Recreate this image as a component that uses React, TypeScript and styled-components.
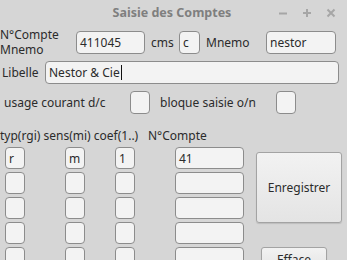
import React from 'react';
import styled, { createGlobalStyle } from 'styled-components';

const GlobalStyle = createGlobalStyle`
  html, body {
    margin: 0;
    padding: 0;
    background: #d6d6d6;
  }
  body {
    font-family: "Noto Sans", "DejaVu Sans", sans-serif;
    font-size: 12px;
    color: #2b2b2b;
  }
`;

const rows = [
  { typ: 'r', sens: 'm', coef: '1', compte: '41' },
  { typ: '', sens: '', coef: '', compte: '' },
  { typ: '', sens: '', coef: '', compte: '' },
  { typ: '', sens: '', coef: '', compte: '' },
  { typ: '', sens: '', coef: '', compte: '' },
];

const App: React.FC = () => {
  return (
    <Window>
      <GlobalStyle />
      <TitleBar>
        <span />
        <Title>Saisie des Comptes</Title>
        <Controls>
          <svg width="10" height="10" viewBox="0 0 10 10">
            <path d="M1 5.5h8" stroke="#a6a6a6" strokeWidth="2" />
          </svg>
          <svg width="10" height="10" viewBox="0 0 10 10">
            <path d="M1 5h8M5 1v8" stroke="#a6a6a6" strokeWidth="2" />
          </svg>
          <svg width="10" height="10" viewBox="0 0 10 10">
            <path d="M1.5 1.5l7 7M8.5 1.5l-7 7" stroke="#a6a6a6" strokeWidth="2" />
          </svg>
        </Controls>
      </TitleBar>

      <Row $top={3}>
        <StackLabel>
          <span>N°Compte</span>
          <span>Mnemo</span>
        </StackLabel>
        <Field $w={69}>411045</Field>
        <Label $w={28} $ml={6}>cms</Label>
        <Field $w={21}>c</Field>
        <Label $w={60} $ml={6}>Mnemo</Label>
        <Field $w={70}>nestor</Field>
      </Row>

      <Row $top={4}>
        <Label $w={43} $ml={2}>Libelle</Label>
        <Field $w={294}>
          Nestor &amp; Cie<Caret />
        </Field>
      </Row>

      <Row $top={7}>
        <Label $w={126} $ml={4}>usage courant d/c</Label>
        <Check />
        <Label $w={116} $ml={10}>bloque saisie o/n</Label>
        <Check />
      </Row>

      <Header>
        <HeaderCols>typ(rgi) sens(mi) coef(1..)</HeaderCols>
        <span>N°Compte</span>
      </Header>

      <Body>
        <Grid>
          {rows.map((r, i) => (
            <React.Fragment key={i}>
              <Cell $w={20}>{r.typ}</Cell>
              <Cell $w={20}>{r.sens}</Cell>
              <Cell $w={20}>{r.coef}</Cell>
              <Cell $w={69}>{r.compte}</Cell>
            </React.Fragment>
          ))}
        </Grid>
        <Actions>
          <BigButton>Enregistrer</BigButton>
          <SmallButton>Efface</SmallButton>
        </Actions>
      </Body>
    </Window>
  );
};

export default App;

const Window = styled.div`
  width: 347px;
  height: 260px;
  overflow: hidden;
  background: #d6d6d6;
`;

const TitleBar = styled.div`
  height: 24px;
  display: grid;
  grid-template-columns: 1fr auto 1fr;
  align-items: center;
`;

const Title = styled.div`
  font-weight: bold;
  font-size: 12.5px;
  color: #7f7f7f;
  padding-right: 3px;
`;

const Controls = styled.div`
  display: flex;
  justify-content: flex-end;
  gap: 14px;
  padding-right: 11px;
  padding-top: 1px;
`;

const Row = styled.div<{ $top: number }>`
  display: flex;
  align-items: center;
  margin-top: ${(p) => p.$top}px;
`;

const StackLabel = styled.div`
  display: flex;
  flex-direction: column;
  line-height: 15px;
  width: 76px;
`;

const Label = styled.span<{ $w: number; $ml?: number }>`
  box-sizing: border-box;
  width: ${(p) => p.$w}px;
  margin-left: ${(p) => p.$ml ?? 0}px;
  white-space: nowrap;
`;

const Field = styled.div<{ $w: number }>`
  box-sizing: border-box;
  width: ${(p) => p.$w}px;
  height: 23px;
  padding: 0 3px;
  display: flex;
  align-items: center;
  background: #f3f3f3;
  border: 1px solid #8c8c8c;
  border-radius: 4px;
  color: #2b2b2b;
  white-space: nowrap;
`;

const Caret = styled.span`
  display: inline-block;
  width: 0;
  height: 15px;
  border-left: 1px solid #111;
  margin-left: 1px;
`;

const Check = styled.div`
  box-sizing: border-box;
  width: 20px;
  height: 23px;
  background: #f3f3f3;
  border: 1px solid #8c8c8c;
  border-radius: 4px;
`;

const Header = styled.div`
  display: flex;
  margin-top: 12px;
  height: 18px;
  align-items: center;
  white-space: nowrap;
`;

const HeaderCols = styled.span`
  width: 148px;
`;

const Body = styled.div`
  display: flex;
  margin-top: 3px;
`;

const Grid = styled.div`
  display: grid;
  grid-template-columns: 60px 50px 60px 69px;
  row-gap: 3px;
  margin-left: 5px;
  height: fit-content;
`;

const Cell = styled.div<{ $w: number }>`
  box-sizing: border-box;
  width: ${(p) => p.$w}px;
  height: 22px;
  padding: 0 3px;
  display: flex;
  align-items: center;
  background: #f3f3f3;
  border: 1px solid #8c8c8c;
  border-radius: 4px;
  white-space: nowrap;
`;

const Actions = styled.div`
  display: flex;
  flex-direction: column;
  align-items: flex-start;
  margin-left: 12px;
  padding-top: 5px;
`;

const ButtonBase = styled.div`
  box-sizing: border-box;
  display: flex;
  align-items: center;
  justify-content: center;
  background: linear-gradient(#f2f2f2, #e4e4e4);
  border: 1px solid #a3a3a3;
  border-radius: 3px;
  box-shadow: 0 1px 1px rgba(0, 0, 0, 0.12);
  color: #2b2b2b;
`;

const BigButton = styled(ButtonBase)`
  width: 86px;
  height: 71px;
`;

const SmallButton = styled(ButtonBase)`
  width: 66px;
  height: 24px;
  margin-top: 24px;
  margin-left: 5px;
  align-items: flex-start;
  padding-top: 3px;
`;
